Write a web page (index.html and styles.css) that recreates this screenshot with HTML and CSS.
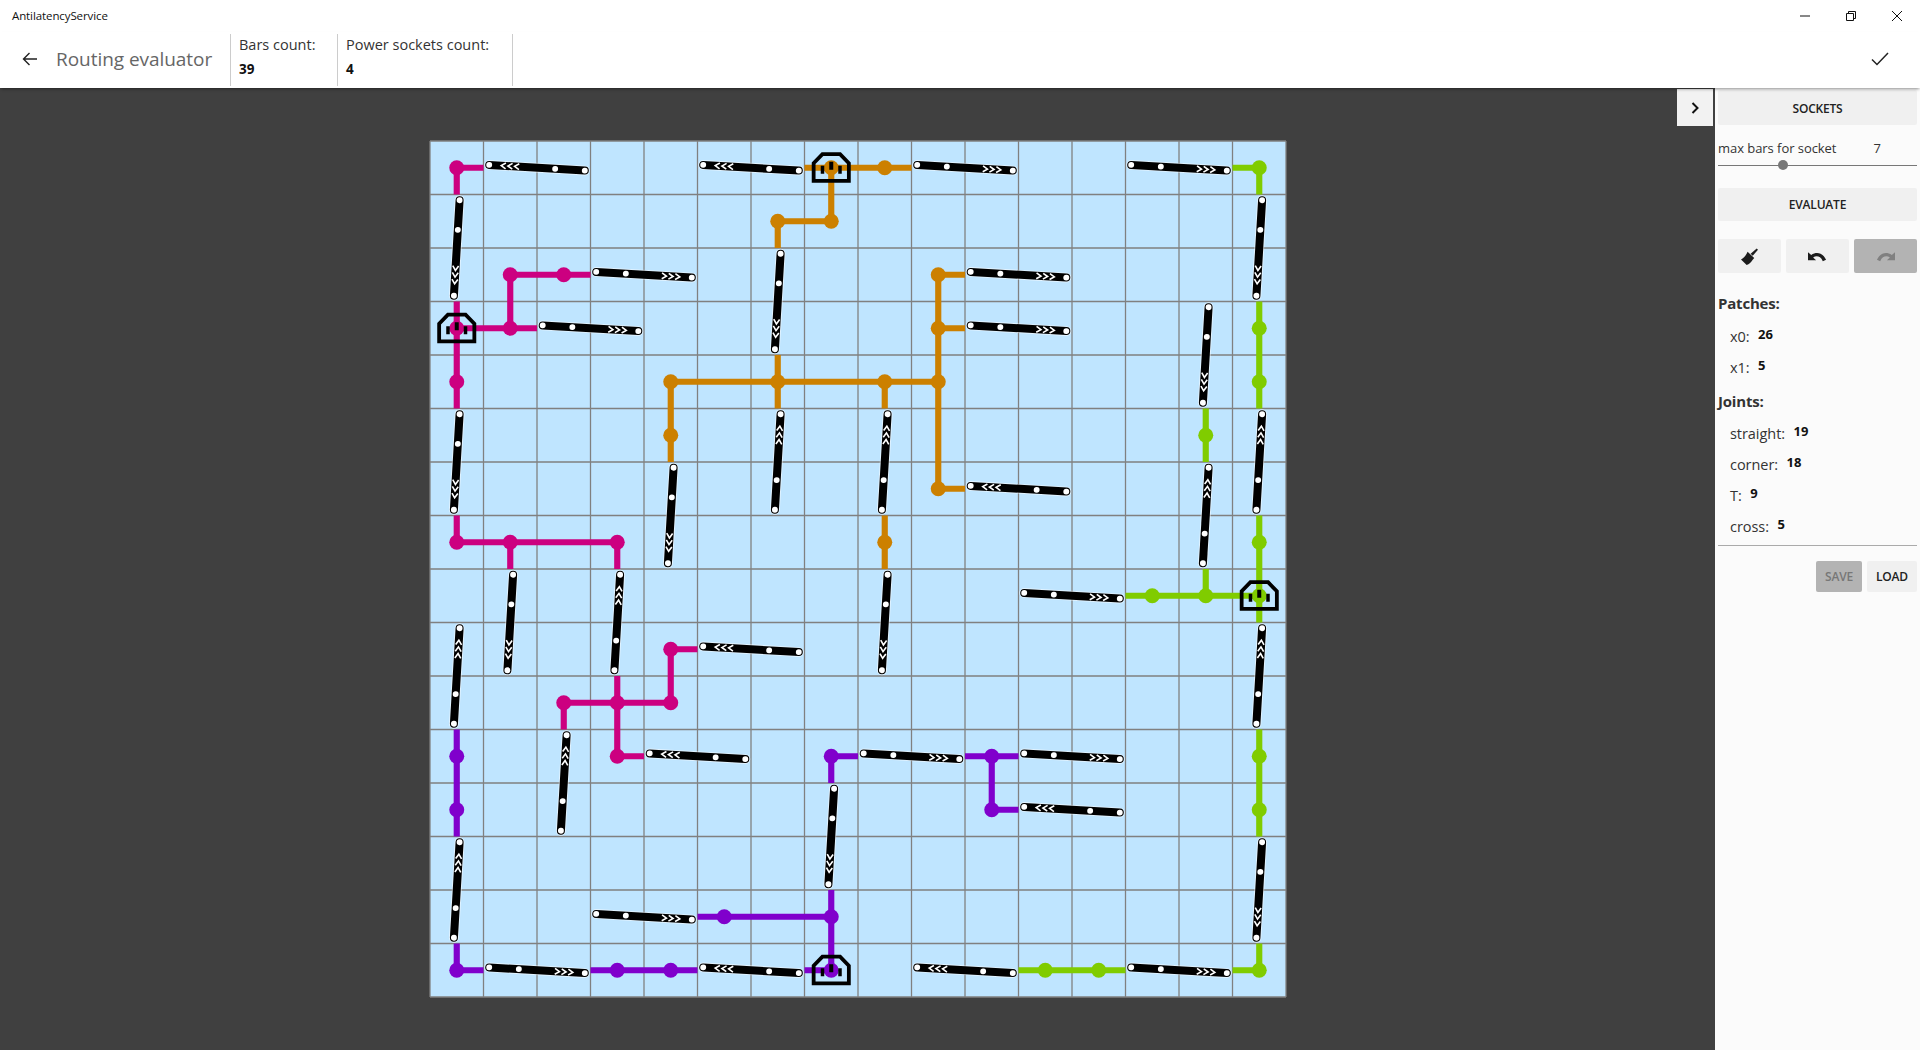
FILE: index.html
```html
<!DOCTYPE html>
<html lang="en">

<head>
    <meta charset="UTF-8">
    <title>AntilatencyService</title>
    <link rel="stylesheet" href="styles.css">
</head>

<body>
    <!-- window title -->
    <div class="titlebar">
        <span class="app-name">AntilatencyService</span>
        <div class="window-controls">
            <svg class="win-icon" viewBox="0 0 12 12"><path d="M1 6H11" /></svg>
            <svg class="win-icon" viewBox="0 0 12 12"><path d="M1.5 3.5H8.5V10.5H1.5ZM3.5 3.5V1.5H10.5V8.5H8.5" /></svg>
            <svg class="win-icon" viewBox="0 0 12 12"><path d="M1 1L11 11M11 1L1 11" /></svg>
        </div>
    </div>

    <!-- page header -->
    <header class="header">
        <div class="title-block">
            <svg class="back-icon" viewBox="0 0 16 16"><path d="M15 8H1.5M7.5 2L1.5 8L7.5 14" /></svg>
            <span class="page-title">Routing evaluator</span>
        </div>
        <div class="stat stat-bars">
            <span class="stat-label">Bars count:</span>
            <b class="stat-value">39</b>
        </div>
        <div class="stat stat-sockets">
            <span class="stat-label">Power sockets count:</span>
            <b class="stat-value">4</b>
        </div>
        <svg class="accept-icon" viewBox="0 0 18 14"><path d="M1 7.5L6 12.5L17 1" /></svg>
    </header>

    <div class="main">
        <div class="canvas-area">
            <button class="panel-toggle">
                <svg viewBox="0 0 8 12"><path d="M1.5 1L6.5 6L1.5 11" /></svg>
            </button>

            <svg class="board" viewBox="0 0 16 16">
                <defs>
                    <g id="bar">
                        <path class="bar-halo" d="M-.895 0H.895" />
                        <path class="bar-body" d="M-.895 0H.895" />
                        <circle class="bar-dot" cx="-.895" cy="0" />
                        <circle class="bar-dot" cx="-.34" cy="0" />
                        <circle class="bar-dot" cx=".895" cy="0" />
                        <path class="bar-arrows" d="M.335 -.055L.42 0L.335 .055M.46 -.055L.545 0L.46 .055M.585 -.055L.67 0L.585 .055" />
                    </g>
                    <use id="bar-e" href="#bar" transform="rotate(3.4)" />
                    <use id="bar-s" href="#bar" transform="rotate(93.4)" />
                    <use id="bar-w" href="#bar" transform="rotate(183.4)" />
                    <use id="bar-n" href="#bar" transform="rotate(273.4)" />
                    <g id="socket" transform="scale(.0187)">
                        <path class="socket-shell" d="M-17.6 13.2V-4.5L-8.8 -13.6H8.8L17.6 -4.5V13.2Z" />
                        <path class="socket-pin" d="M-2 -6H2V2H-2ZM-10.5 -2H-7V6H-10.5ZM7 -2H10.5V6H7Z" />
                    </g>
                </defs>

                <rect class="board-bg" width="16" height="16" />
                <path class="grid" d="M0 0V16M1 0V16M2 0V16M3 0V16M4 0V16M5 0V16M6 0V16M7 0V16M8 0V16M9 0V16M10 0V16M11 0V16M12 0V16M13 0V16M14 0V16M15 0V16M16 0V16
                    M0 0H16M0 1H16M0 2H16M0 3H16M0 4H16M0 5H16M0 6H16M0 7H16M0 8H16M0 9H16M0 10H16M0 11H16M0 12H16M0 13H16M0 14H16M0 15H16M0 16H16" />

                <!-- wires -->
                <g class="net net-pink">
                    <path d="M1 .5H.5V1M.5 3V5M.5 3.5H2M1.5 3.5V2.5H3M.5 7V7.5H3.5V8M1.5 7.5V8M5 9.5H4.5V10.5H2.5V11M3.5 10V11.5H4" />
                    <circle cx=".5" cy=".5" /><circle cx=".5" cy="3.5" /><circle cx=".5" cy="4.5" />
                    <circle cx="1.5" cy="3.5" /><circle cx="1.5" cy="2.5" /><circle cx="2.5" cy="2.5" />
                    <circle cx=".5" cy="7.5" /><circle cx="1.5" cy="7.5" /><circle cx="3.5" cy="7.5" />
                    <circle cx="4.5" cy="9.5" /><circle cx="4.5" cy="10.5" /><circle cx="3.5" cy="10.5" />
                    <circle cx="2.5" cy="10.5" /><circle cx="3.5" cy="11.5" />
                </g>
                <g class="net net-orange">
                    <path d="M7 .5H9M7.5 .5V1.5H6.5V2M10 2.5H9.5V6.5H10M9.5 3.5H10M9.5 4.5H4.5V6M6.5 4V5M8.5 4.5V5M8.5 7V8" />
                    <circle cx="7.5" cy=".5" /><circle cx="8.5" cy=".5" /><circle cx="7.5" cy="1.5" /><circle cx="6.5" cy="1.5" />
                    <circle cx="9.5" cy="2.5" /><circle cx="9.5" cy="3.5" /><circle cx="9.5" cy="4.5" /><circle cx="9.5" cy="6.5" />
                    <circle cx="4.5" cy="4.5" /><circle cx="6.5" cy="4.5" /><circle cx="8.5" cy="4.5" /><circle cx="4.5" cy="5.5" />
                    <circle cx="8.5" cy="7.5" />
                </g>
                <g class="net net-green">
                    <path d="M15 .5H15.5V1M15.5 3V5M14.5 5V6M15.5 7V9M13 8.5H15.5M14.5 8V8.5M15.5 11V13M15.5 15V15.5H15M11 15.5H13" />
                    <circle cx="15.5" cy=".5" /><circle cx="15.5" cy="3.5" /><circle cx="15.5" cy="4.5" /><circle cx="14.5" cy="5.5" />
                    <circle cx="15.5" cy="7.5" /><circle cx="15.5" cy="8.5" /><circle cx="13.5" cy="8.5" /><circle cx="14.5" cy="8.5" />
                    <circle cx="15.5" cy="11.5" /><circle cx="15.5" cy="12.5" /><circle cx="15.5" cy="15.5" />
                    <circle cx="11.5" cy="15.5" /><circle cx="12.5" cy="15.5" />
                </g>
                <g class="net net-purple">
                    <path d="M.5 11V13M.5 15V15.5H1M3 15.5H5M7 15.5H7.5V14.5H5M7.5 14V14.5M8 11.5H7.5V12M10 11.5H11M10.5 11.5V12.5H11" />
                    <circle cx=".5" cy="11.5" /><circle cx=".5" cy="12.5" /><circle cx=".5" cy="15.5" />
                    <circle cx="3.5" cy="15.5" /><circle cx="4.5" cy="15.5" />
                    <circle cx="7.5" cy="15.5" /><circle cx="7.5" cy="14.5" /><circle cx="5.5" cy="14.5" />
                    <circle cx="7.5" cy="11.5" /><circle cx="10.5" cy="11.5" /><circle cx="10.5" cy="12.5" />
                </g>

                <!-- power sockets -->
                <use href="#socket" x="7.5" y=".5" />
                <use href="#socket" x=".5" y="3.5" />
                <use href="#socket" x="15.5" y="8.5" />
                <use href="#socket" x="7.5" y="15.5" />

                <!-- bars along rows -->
                <use href="#bar-w" x="2" y=".5" />
                <use href="#bar-w" x="6" y=".5" />
                <use href="#bar-e" x="10" y=".5" />
                <use href="#bar-e" x="14" y=".5" />
                <use href="#bar-e" x="4" y="2.5" />
                <use href="#bar-e" x="3" y="3.5" />
                <use href="#bar-e" x="11" y="2.5" />
                <use href="#bar-e" x="11" y="3.5" />
                <use href="#bar-w" x="11" y="6.5" />
                <use href="#bar-e" x="12" y="8.5" />
                <use href="#bar-w" x="6" y="9.5" />
                <use href="#bar-w" x="5" y="11.5" />
                <use href="#bar-e" x="9" y="11.5" />
                <use href="#bar-e" x="12" y="11.5" />
                <use href="#bar-w" x="12" y="12.5" />
                <use href="#bar-e" x="4" y="14.5" />
                <use href="#bar-e" x="2" y="15.5" />
                <use href="#bar-w" x="6" y="15.5" />
                <use href="#bar-w" x="10" y="15.5" />
                <use href="#bar-e" x="14" y="15.5" />

                <!-- bars along columns -->
                <use href="#bar-s" x=".5" y="2" />
                <use href="#bar-s" x="6.5" y="3" />
                <use href="#bar-s" x="14.5" y="4" />
                <use href="#bar-s" x="15.5" y="2" />
                <use href="#bar-s" x=".5" y="6" />
                <use href="#bar-n" x="6.5" y="6" />
                <use href="#bar-n" x="8.5" y="6" />
                <use href="#bar-n" x="15.5" y="6" />
                <use href="#bar-n" x="14.5" y="7" />
                <use href="#bar-s" x="4.5" y="7" />
                <use href="#bar-s" x="1.5" y="9" />
                <use href="#bar-n" x="3.5" y="9" />
                <use href="#bar-s" x="8.5" y="9" />
                <use href="#bar-n" x=".5" y="10" />
                <use href="#bar-n" x="15.5" y="10" />
                <use href="#bar-n" x="2.5" y="12" />
                <use href="#bar-s" x="7.5" y="13" />
                <use href="#bar-n" x=".5" y="14" />
                <use href="#bar-s" x="15.5" y="14" />
            </svg>
        </div>

        <!-- right side panel -->
        <aside class="panel">
            <button class="btn btn-sockets">SOCKETS</button>
            <div class="slider-row">
                <span>max bars for socket</span>
                <span class="slider-value">7</span>
            </div>
            <div class="slider"><span class="slider-thumb"></span></div>
            <button class="btn btn-evaluate">EVALUATE</button>
            <div class="tool-row">
                <button class="btn tool">
                    <svg class="tool-icon" viewBox="0 0 18 18">
                        <path d="M10.2 6L16.6 .4L18 1.8L12.4 8.2Z" />
                        <path d="M7 4L14 10.6L12.2 12.6C11 14.8 8.5 17 6 18L0 12.2C3 10.5 5.5 7.5 7 4Z" />
                    </svg>
                </button>
                <button class="btn tool">
                    <svg class="tool-icon tool-icon-arrow" viewBox="0 0 20 11">
                        <path d="M0 1V9.5H8.5L5.4 6.6C8.6 4.4 13 4.8 15.6 10.4L19 9C16 2 9.4 -0.2 3.4 3.9Z" />
                    </svg>
                </button>
                <button class="btn tool tool-disabled">
                    <svg class="tool-icon tool-icon-arrow" viewBox="0 0 20 11">
                        <path d="M20 1V9.5H11.5L14.6 6.6C11.4 4.4 7 4.8 4.4 10.4L1 9C4 2 10.6 -0.2 16.6 3.9Z" />
                    </svg>
                </button>
            </div>

            <h4 class="stats-title stats-title-first">Patches:</h4>
            <div class="stats-row"><span>x0:</span><b>26</b></div>
            <div class="stats-row"><span>x1:</span><b>5</b></div>
            <h4 class="stats-title stats-title-next">Joints:</h4>
            <div class="stats-row"><span>straight:</span><b>19</b></div>
            <div class="stats-row"><span>corner:</span><b>18</b></div>
            <div class="stats-row"><span>T:</span><b>9</b></div>
            <div class="stats-row"><span>cross:</span><b>5</b></div>

            <div class="file-row">
                <button class="btn btn-save">SAVE</button>
                <button class="btn btn-load">LOAD</button>
            </div>
        </aside>
    </div>
</body>

</html>
```

FILE: styles.css
```css
* {
    margin: 0;
    padding: 0;
    box-sizing: border-box;
}

html,
body {
    height: 100%;
}

body {
    display: flex;
    flex-direction: column;
    overflow: hidden;
    font-family: "Open Sans", "Noto Sans", sans-serif;
    color: #222;
    background: #fff;
}

/* window title */
.titlebar {
    height: 32px;
    display: flex;
    align-items: center;
    justify-content: space-between;
    padding-left: 12px;
}

.app-name {
    font-size: 11.5px;
    letter-spacing: -.1px;
    color: #111;
    margin-bottom: 2px;
}

.window-controls {
    display: flex;
    gap: 34px;
    padding-right: 17px;
}

.win-icon {
    width: 12px;
    height: 12px;
    fill: none;
    stroke: #111;
    stroke-width: 1;
}

/* page header */
.header {
    height: 56px;
    display: flex;
    align-items: stretch;
    position: relative;
    z-index: 1;
    box-shadow: 0 2px 3px -1px rgba(0, 0, 0, .45);
    background: #fff;
}

.title-block {
    width: 231px;
    display: flex;
    align-items: center;
    border-right: 1px solid #ccc;
    margin: 2px 0;
    padding: 0 0 2px 22px;
}

.back-icon {
    width: 16px;
    height: 16px;
    fill: none;
    stroke: #222;
    stroke-width: 1.4;
    margin-right: 18px;
}

.page-title {
    font-size: 19px;
    color: #666;
    letter-spacing: -.05px;
}

.stat {
    display: flex;
    flex-direction: column;
    gap: 6px;
    padding: 1px 0 0 8px;
    margin: 2px 0;
    border-right: 1px solid #ccc;
}

.stat-bars {
    width: 107px;
}

.stat-sockets {
    width: 175px;
}

.stat-label {
    font-size: 14.5px;
    color: #333;
}

.stat-value {
    font-size: 13.5px;
    color: #111;
}

.accept-icon {
    width: 18px;
    height: 14px;
    fill: none;
    stroke: #222;
    stroke-width: 1.5;
    align-self: center;
    margin: 0 31px 3px auto;
}

/* board */
.main {
    flex: 1;
    display: flex;
    min-height: 0;
}

.canvas-area {
    flex: 1;
    position: relative;
    display: flex;
    align-items: center;
    justify-content: center;
    background: #404040;
    padding-left: 1px;
}

.board {
    width: 856px;
    height: 856px;
    overflow: visible;
}

.board-bg {
    fill: #bfe5ff;
}

.grid {
    fill: none;
    stroke: #808080;
    stroke-width: .024;
}

.net path {
    fill: none;
    stroke: currentColor;
    stroke-width: .115;
}

.net circle {
    r: .14px;
    fill: currentColor;
}

.net-pink {
    color: #cc0080;
}

.net-orange {
    color: #cc8000;
}

.net-green {
    color: #80cc00;
}

.net-purple {
    color: #8000cc;
}

.socket-shell {
    fill: none;
    stroke: #000;
    stroke-width: 3.8;
}

.socket-pin {
    fill: #000;
}

.bar-halo {
    stroke: #fff;
    stroke-opacity: .55;
    stroke-width: .185;
    stroke-linecap: round;
}

.bar-body {
    stroke: #000;
    stroke-width: .15;
    stroke-linecap: round;
}

.bar-dot {
    r: .055px;
    fill: #fff;
}

.bar-arrows {
    fill: none;
    stroke: #fff;
    stroke-width: .03;
}

.panel-toggle {
    position: absolute;
    top: 1px;
    right: 2px;
    width: 36px;
    height: 37px;
    border: none;
    background: #f2f2f2;
    display: flex;
    align-items: center;
    justify-content: center;
}

.panel-toggle svg {
    width: 8px;
    height: 12px;
    fill: none;
    stroke: #111;
    stroke-width: 2;
}

/* side panel */
.panel {
    width: 205px;
    background: #fbfbfb;
    padding: 2px 3px 0;
    display: flex;
    flex-direction: column;
    font-size: 13px;
}

.btn {
    border: none;
    border-radius: 2px;
    background: #f0f0f0;
    font-family: inherit;
    font-size: 12px;
    font-weight: 600;
    color: #222;
    letter-spacing: -.2px;
    display: flex;
    align-items: center;
    justify-content: center;
}

.btn-sockets {
    height: 35px;
    padding-top: 2px;
}

.slider-row {
    display: flex;
    justify-content: space-between;
    margin-top: 14px;
    height: 18px;
    line-height: 18px;
    letter-spacing: -.05px;
    padding-right: 36px;
    color: #333;
}

.slider-value {
    font-size: 13px;
}

.slider {
    height: 1px;
    background: #777;
    margin-top: 8px;
    position: relative;
}

.slider-thumb {
    position: absolute;
    left: 60px;
    top: -5px;
    width: 10px;
    height: 10px;
    border-radius: 50%;
    background: #777;
}

.btn-evaluate {
    height: 33px;
    margin-top: 22px;
}

.tool-row {
    display: flex;
    gap: 5px;
    margin-top: 18px;
}

.tool {
    flex: 1;
    height: 34px;
}

.tool-icon {
    width: 17px;
    height: 17px;
    fill: #1c1c1c;
}

.tool-icon-arrow {
    width: 19px;
    height: 11px;
}

.tool-disabled {
    background: #b3b3b3;
}

.tool-disabled .tool-icon {
    fill: #808080;
}

.stats-title {
    font-size: 15px;
    font-weight: 700;
    letter-spacing: -.2px;
    color: #333;
    height: 30px;
    line-height: 30px;
    margin-bottom: 2.5px;
}

.stats-title-first {
    margin-top: 15px;
}

.stats-title-next {
    margin-top: 3px;
}

.stats-row {
    height: 31px;
    display: flex;
    align-items: center;
    gap: 8.5px;
    padding-left: 12px;
    font-size: 14.5px;
    letter-spacing: -.05px;
    color: #333;
}

.stats-row b {
    font-size: 13px;
    color: #111;
    margin-top: -5px;
}

.file-row {
    display: flex;
    justify-content: flex-end;
    gap: 5px;
    border-top: 1px solid #aaa;
    margin-top: 3px;
    padding-top: 15px;
}

.btn-save {
    width: 46px;
    height: 31px;
    background: #b3b3b3;
    color: #777;
}

.btn-load {
    width: 50px;
    height: 31px;
}
```
